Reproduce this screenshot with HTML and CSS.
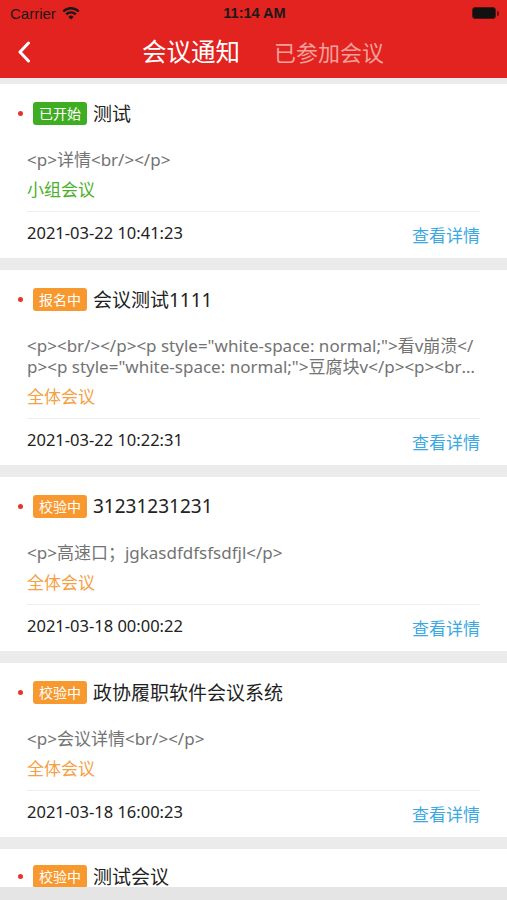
FILE: index.html
```html
<!DOCTYPE html>
<html lang="zh-CN">
<head>
    <meta charset="UTF-8">
    <meta name="viewport" content="width=device-width, initial-scale=1.0">
    <title>会议通知</title>
    <link rel="stylesheet" href="styles.css">
</head>
<body>
    <header class="topbar">
        <div class="status">
            <div class="carrier">
                Carrier
                <svg class="wifi" viewBox="0 0 18 13" width="18" height="13">
                    <path d="M9 12.6 L6.4 9.9 A3.6 3.6 0 0 1 11.6 9.9 Z" fill="#1a1a1a"/>
                    <path d="M4.2 7.4 A6.8 6.8 0 0 1 13.8 7.4" stroke="#1a1a1a" stroke-width="2.4" fill="none"/>
                    <path d="M1.3 4.5 A10.9 10.9 0 0 1 16.7 4.5" stroke="#1a1a1a" stroke-width="2.4" fill="none"/>
                </svg>
            </div>
            <div class="clock">11:14 AM</div>
            <div class="battery"><span class="battery-fill"></span></div>
        </div>
        <nav class="navbar">
            <svg class="back" viewBox="0 0 14 22" width="14" height="22">
                <polyline points="11.5,2 3,11 11.5,20" stroke="#fff" stroke-width="3" fill="none" stroke-linecap="round" stroke-linejoin="round"/>
            </svg>
            <div class="tabs">
                <span class="tab active">会议通知</span>
                <span class="tab">已参加会议</span>
            </div>
        </nav>
    </header>

    <main class="list">
        <section class="card">
            <div class="card-head">
                <span class="dot"></span>
                <span class="badge badge-green">已开始</span>
                <span class="card-title">测试</span>
            </div>
            <p class="desc">&lt;p&gt;详情&lt;br/&gt;&lt;/p&gt;</p>
            <div class="kind kind-green">小组会议</div>
            <div class="divider"></div>
            <div class="card-foot">
                <span class="date">2021-03-22 10:41:23</span>
                <span class="more">查看详情</span>
            </div>
        </section>

        <section class="card">
            <div class="card-head">
                <span class="dot"></span>
                <span class="badge badge-orange">报名中</span>
                <span class="card-title">会议测试1111</span>
            </div>
            <p class="desc">&lt;p&gt;&lt;br/&gt;&lt;/p&gt;&lt;p style="white-space: normal;"&gt;看v崩溃&lt;/p&gt;&lt;p style="white-space: normal;"&gt;豆腐块v&lt;/p&gt;&lt;p&gt;&lt;br/&gt;&lt;/p&gt;&lt;p&gt;发给对方&lt;/p&gt;</p>
            <div class="kind kind-orange">全体会议</div>
            <div class="divider"></div>
            <div class="card-foot">
                <span class="date">2021-03-22 10:22:31</span>
                <span class="more">查看详情</span>
            </div>
        </section>

        <section class="card">
            <div class="card-head">
                <span class="dot"></span>
                <span class="badge badge-orange">校验中</span>
                <span class="card-title">31231231231</span>
            </div>
            <p class="desc">&lt;p&gt;高速口；jgkasdfdfsfsdfjl&lt;/p&gt;</p>
            <div class="kind kind-orange">全体会议</div>
            <div class="divider"></div>
            <div class="card-foot">
                <span class="date">2021-03-18 00:00:22</span>
                <span class="more">查看详情</span>
            </div>
        </section>

        <section class="card">
            <div class="card-head">
                <span class="dot"></span>
                <span class="badge badge-orange">校验中</span>
                <span class="card-title">政协履职软件会议系统</span>
            </div>
            <p class="desc">&lt;p&gt;会议详情&lt;br/&gt;&lt;/p&gt;</p>
            <div class="kind kind-orange">全体会议</div>
            <div class="divider"></div>
            <div class="card-foot">
                <span class="date">2021-03-18 16:00:23</span>
                <span class="more">查看详情</span>
            </div>
        </section>

        <section class="card card-last">
            <div class="card-head">
                <span class="dot"></span>
                <span class="badge badge-orange">校验中</span>
                <span class="card-title">测试会议</span>
            </div>
        </section>
    </main>
</body>
</html>
```

FILE: styles.css
```css
body {
    margin: 0;
    background-color: #e5e5e5;
    font-family: "Noto Sans", "Noto Sans CJK SC", sans-serif;
    color: #222;
    height: 900px;
    overflow: hidden;
}
.topbar {
    background-color: #e3231f;
    height: 78px;
}
.status {
    display: flex;
    align-items: center;
    justify-content: space-between;
    height: 26px;
    padding: 0 8px 0 10px;
    font-family: "Liberation Sans", Arial, sans-serif;
    color: #1a1a1a;
}
.carrier {
    display: flex;
    align-items: center;
    gap: 6px;
    font-size: 15px;
    width: 90px;
}
.clock {
    font-size: 14.5px;
    font-weight: bold;
}
.battery {
    position: relative;
    width: 90px;
    display: flex;
    justify-content: flex-end;
    padding-right: 3px;
    box-sizing: border-box;
}
.battery-fill {
    display: block;
    width: 22px;
    height: 10px;
    background-color: #111;
    border: 1px solid #5a1210;
    border-radius: 3px;
}
.battery::after {
    content: "";
    position: absolute;
    right: 0;
    top: 4px;
    width: 2px;
    height: 5px;
    border-radius: 0 2px 2px 0;
    background-color: #5a1210;
}
.navbar {
    display: flex;
    align-items: center;
    height: 52px;
    padding-left: 17px;
}
.back {
    display: block;
}
.tabs {
    display: flex;
    align-items: center;
    gap: 34px;
    margin-left: 111px;
}
.tab {
    font-size: 22px;
    color: #f2a19c;
    line-height: 30px;
}
.tab.active {
    font-size: 24.5px;
    color: #fff;
}
.list {
    height: 803px;
    padding-top: 6px;
    overflow: hidden;
    background-color: #ebebeb;
}
.card {
    background-color: #fff;
    padding: 17px 27px 11px;
    margin-bottom: 12px;
}
.card-last {
    padding-top: 15px;
    height: 40px;
}
.card-head {
    display: flex;
    align-items: center;
    height: 24px;
    margin-left: -9px;
}
.dot {
    width: 5px;
    height: 5px;
    border-radius: 50%;
    background-color: #e8322b;
    margin-right: 10px;
}
.badge {
    height: 23px;
    line-height: 23px;
    padding: 0 6px;
    border-radius: 3px;
    color: #fff;
    font-size: 14px;
}
.badge-green {
    background-color: #3fad22;
}
.badge-orange {
    background-color: #f7992f;
}
.card-title {
    margin-left: 6px;
    font-size: 19px;
    color: #222;
}
.desc {
    margin: 24px 0 0;
    font-size: 17px;
    line-height: 21px;
    color: #737373;
    word-break: break-all;
    display: -webkit-box;
    -webkit-line-clamp: 2;
    -webkit-box-orient: vertical;
    overflow: hidden;
}
.kind {
    margin-top: 9px;
    font-size: 17px;
    line-height: 22px;
}
.kind-green {
    color: #4caf2a;
}
.kind-orange {
    color: #f5a043;
}
.divider {
    margin-top: 10px;
    height: 1px;
    background-color: #eee;
}
.card-foot {
    display: flex;
    justify-content: space-between;
    align-items: flex-start;
    padding-top: 10px;
}
.date {
    font-size: 16.5px;
    line-height: 22px;
    color: #222;
}
.more {
    margin-top: 3px;
    font-size: 17px;
    line-height: 22px;
    color: #3aa8e4;
}
```
